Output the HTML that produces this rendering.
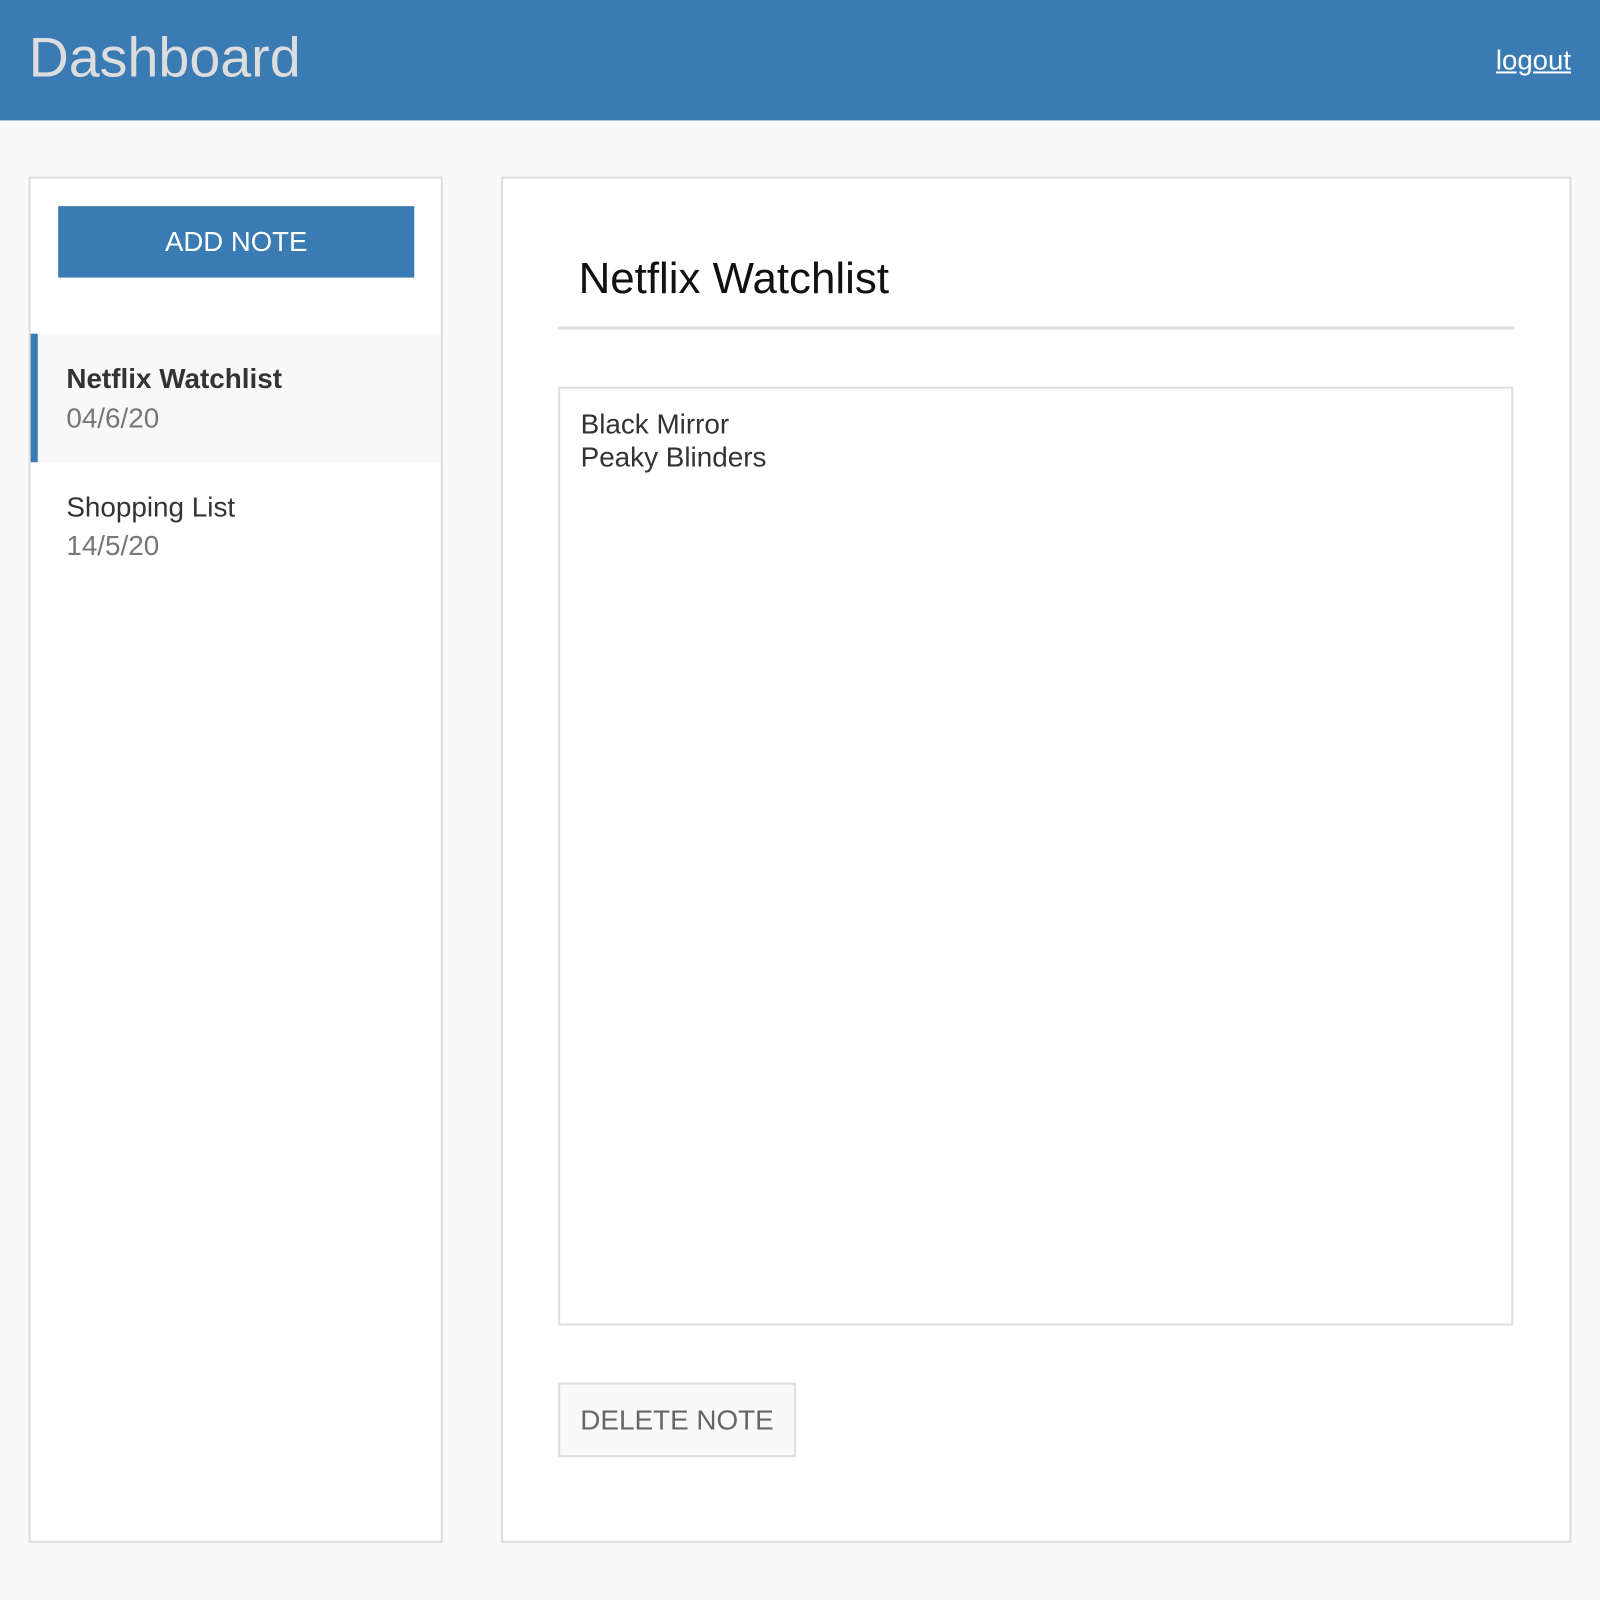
<!DOCTYPE html>
<html><head><meta charset="utf-8"><style>
html,body{margin:0;padding:0;width:1600px;height:1600px;overflow:hidden;background:#f9f9f9;font-family:"Liberation Sans",sans-serif}
#w{position:absolute;left:0;top:0;width:1568px;height:1568px;transform:scale(1.020408);transform-origin:0 0}
.a{position:absolute;white-space:nowrap}
</style></head><body><div id="w">
<div class="a" style="left:0;top:0;width:1568px;height:118px;background:#3a7bb3"></div>
<div class="a" style="left:28px;top:26px;font-size:54.5px;line-height:62px;color:#ddd">Dashboard</div>
<div class="a" style="left:1466px;top:43px;font-size:27px;line-height:32px;color:#fff;text-decoration:underline">logout</div>

<div class="a" style="left:28px;top:173px;width:402px;height:1335px;border:2px solid #ddd;background:#fff"></div>
<div class="a" style="left:57px;top:202px;width:349px;height:70px;background:#3a7bb3;color:#fff;font-size:27px;line-height:70px;text-align:center">ADD NOTE</div>
<div class="a" style="left:30px;top:327px;width:402px;height:126px;background:#f8f8f8"></div>
<div class="a" style="left:30px;top:327px;width:7px;height:126px;background:#3a7bb3"></div>
<div class="a" style="left:65px;top:355px;font-size:27.3px;line-height:32px;font-weight:bold;color:#333">Netflix Watchlist</div>
<div class="a" style="left:65px;top:394px;font-size:27.3px;line-height:32px;color:#777">04/6/20</div>
<div class="a" style="left:65px;top:481px;font-size:27.3px;line-height:32px;color:#333">Shopping List</div>
<div class="a" style="left:65px;top:519px;font-size:27.3px;line-height:32px;color:#777">14/5/20</div>

<div class="a" style="left:491px;top:173px;width:1045px;height:1335px;border:2px solid #ddd;background:#fff"></div>
<div class="a" style="left:567px;top:248px;font-size:43px;line-height:50px;color:#111">Netflix Watchlist</div>
<div class="a" style="left:547px;top:320px;width:937px;height:3px;background:#ddd"></div>
<div class="a" style="left:547px;top:379px;width:932px;height:916px;border:2px solid #ddd"></div>
<div class="a" style="left:569px;top:400px;font-size:27.3px;line-height:32px;color:#333">Black Mirror<br>Peaky Blinders</div>
<div class="a" style="left:547px;top:1355px;width:229px;height:69px;border:2px solid #ddd;background:#f9f9f9;color:#666;font-size:27.3px;line-height:69px;text-align:center">DELETE NOTE</div>
</div></body></html>
